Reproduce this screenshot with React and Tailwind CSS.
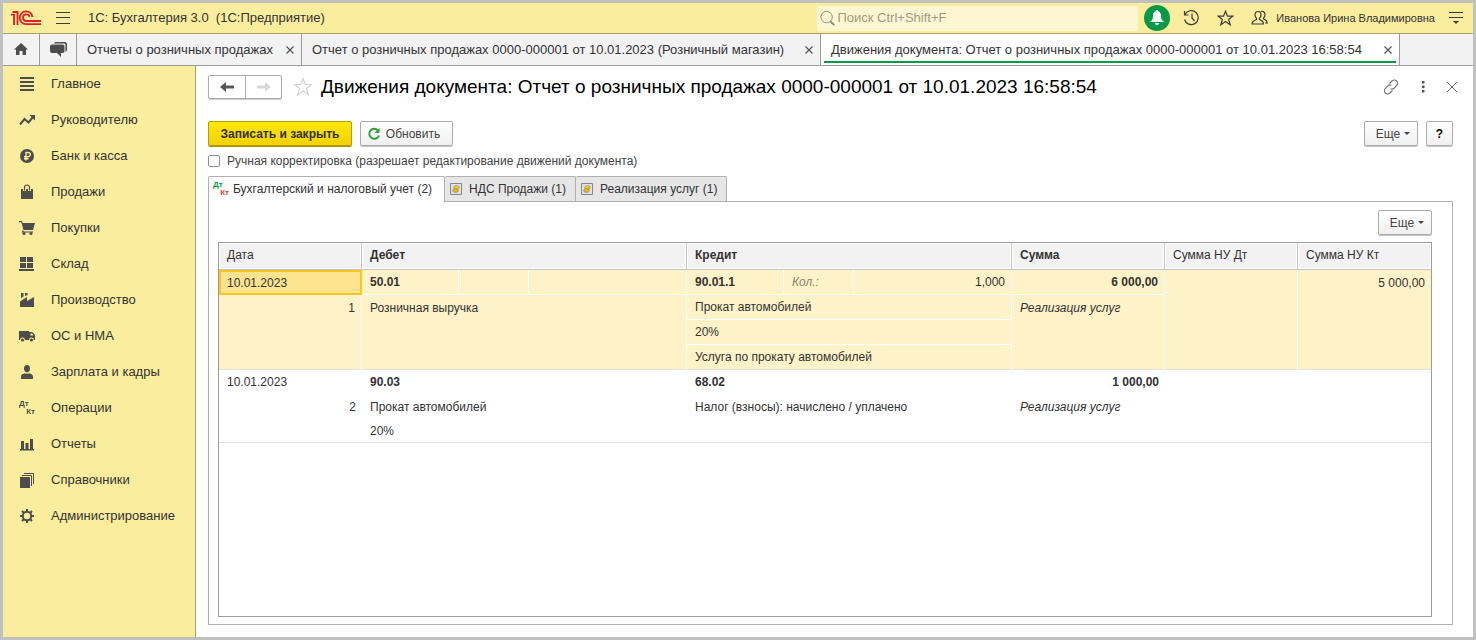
import { useState } from "react";

const font = { fontFamily: '"Liberation Sans", Arial, sans-serif' };

const menu = [
  { label: "Главное", icon: "list" },
  { label: "Руководителю", icon: "trend" },
  { label: "Банк и касса", icon: "ruble" },
  { label: "Продажи", icon: "bag" },
  { label: "Покупки", icon: "cart" },
  { label: "Склад", icon: "stock" },
  { label: "Производство", icon: "factory" },
  { label: "ОС и НМА", icon: "truck" },
  { label: "Зарплата и кадры", icon: "person" },
  { label: "Операции", icon: "dtkt" },
  { label: "Отчеты", icon: "bars" },
  { label: "Справочники", icon: "books" },
  { label: "Администрирование", icon: "gear" },
];

const windows = [
  { label: "Отчеты о розничных продажах", width: "w-[225px]" },
  { label: "Отчет о розничных продажах 0000-000001 от 10.01.2023 (Розничный магазин)", width: "w-[519px]" },
  { label: "Движения документа: Отчет о розничных продажах 0000-000001 от 10.01.2023 16:58:54", width: "w-[579px]", active: true },
];

const icons = {
  list: <path d="M1 1h14v2H1zM1 5h14v2H1zM1 9h14v2H1zM1 13h14v2H1z" />,
  trend: (
    <>
      <path d="M1 12.5 5.5 7l4 3.5L14 5" fill="none" stroke="currentColor" strokeWidth="2" />
      <path d="M10.500 3H16v5.500z" />
    </>
  ),
  ruble: (
    <>
      <circle cx="8" cy="8" r="7" />
      <path d="M7 12.500V4.500h2.200a2 2 0 0 1 0 4.200H5M5 10.700h4.500" fill="none" stroke="#fbed9e" strokeWidth="1.400" />
    </>
  ),
  bag: (
    <>
      <path d="M2 5h12v10H2z" />
      <path d="M5.500 7V3.500a2.500 2.500 0 0 1 5 0V7" fill="none" stroke="#fbed9e" strokeWidth="3" />
      <path d="M5.500 6.500V3.500a2.500 2.500 0 0 1 5 0v3" fill="none" stroke="currentColor" strokeWidth="1.200" />
    </>
  ),
  cart: (
    <>
      <path d="M0 1h3l.6 2H16l-2 7H4.500L2.300 2.300H0z" />
      <path d="M4 10.500 3.500 12H14" fill="none" stroke="currentColor" strokeWidth="1.200" />
      <circle cx="5" cy="13.500" r="1.500" />
      <circle cx="12" cy="13.500" r="1.500" />
    </>
  ),
  stock: <path d="M1 1h6v5H1zM8 1h6v5H8zM1 7h6v5H1zM8 7h6v5H8zM0 13h15v2H0z" />,
  factory: <path d="M1 15V9.500L8 5v4l7-4v10zM2 1h2.500v3.500L2 6zM6 1h2.500v2L6 4z" />,
  truck: (
    <>
      <path d="M0 3h10v9H0zM10 4h3.200L16 7v5h-6z" />
      <path d="M11.500 5.500h1.500L14.500 7.500h-3z" fill="#fbed9e" />
      <circle cx="3.500" cy="12" r="2.400" fill="#fbed9e" />
      <circle cx="12.500" cy="12" r="2.400" fill="#fbed9e" />
      <circle cx="3.500" cy="12" r="1.600" />
      <circle cx="12.500" cy="12" r="1.600" />
    </>
  ),
  person: <path d="M8 1c2 0 3 1.400 3 3.300C11 6.500 10 8.500 8 8.500S5 6.500 5 4.300C5 2.400 6 1 8 1zM2 15v-2.500C2 10.500 4 10 6 9.300c1 .7 3 .7 4 0 2 .7 4 1.200 4 3.200V15z" />,
  bars: <path d="M1 13h14v1.500H1zM2 5h3v8H2zM6.500 7h3v6h-3zM11 3h3v10h-3z" />,
  books: (
    <>
      <path d="M1 5h10v11H1z" />
      <path d="M3 3.500h9.500V14M5 1.500h9.500V12" fill="none" stroke="currentColor" />
    </>
  ),
  gear: (
    <>
      <circle cx="8" cy="8" r="4.200" fill="none" stroke="currentColor" strokeWidth="2" />
      <path
        d="M8 1v3M8 12v3M1 8h3M12 8h3M3 3l2 2M11 11l2 2M13 3l-2 2M5 11l-2 2"
        fill="none"
        stroke="currentColor"
        strokeWidth="2"
      />
    </>
  ),
};

function MenuIcon({ name }) {
  if (name === "dtkt") return <DtKt className="text-[#4d4d4d]" second="text-[#4d4d4d]" />;
  return (
    <svg width="16" height="16" viewBox="0 0 16 16" fill="currentColor" className="shrink-0 text-[#4d4d4d]">
      {icons[name]}
    </svg>
  );
}

function DtKt({ className, second }) {
  return (
    <span aria-hidden="true" className="flex w-4 shrink-0 flex-col text-left text-[8px] leading-[8px] font-bold">
      <span className={className}>Дт</span>
      <span className={`self-end ${second}`}>Кт</span>
    </span>
  );
}

function Logo() {
  return (
    <svg width="30" height="16" viewBox="0 0 30 16" fill="none" stroke="#dd1f26" strokeWidth="1.800">
      <path d="M0 4.700h3V15M1.500 2h5V15" />
      <path d="M21.500 7A6.400 6.400 0 1 0 15.500 14.200H30" />
      <path d="M18.500 6.800A3.300 3.300 0 1 0 15.500 11H30" />
    </svg>
  );
}

function RegisterIcon() {
  return (
    <svg width="12" height="12" viewBox="0 0 12 12" className="shrink-0">
      <path d="M.5.5h11v11H.5z" fill="#dfe1ea" stroke="#85858f" />
      <ellipse cx="6.500" cy="4.500" rx="2.800" ry="1.800" fill="#f0cf3c" stroke="#a8821a" strokeWidth=".7" />
      <ellipse cx="5.500" cy="7.500" rx="2.800" ry="1.900" fill="#e0b92b" stroke="#a8821a" strokeWidth=".7" />
    </svg>
  );
}

function Button({ children, className = "" }) {
  return (
    <button
      type="button"
      className={`flex h-[25px] items-center justify-center rounded-xs border border-[#ababab] bg-linear-to-b from-white to-[#f0f0f0] text-[#444] shadow-[0_1px_0_#c4c4c4] ${className}`}
    >
      {children}
    </button>
  );
}

function MoreButton() {
  return (
    <Button className="w-[54px] gap-1 pl-1">
      Еще
      <svg width="6" height="3" viewBox="0 0 6 3" fill="#444">
        <path d="M0 0h6L3 3z" />
      </svg>
    </Button>
  );
}

function Header() {
  return (
    <header className="flex h-[31px] items-center border-b border-[#a79f6c] bg-[#fbed9e] pr-[10px] pl-2">
      <Logo />
      <button type="button" aria-label="Меню" className="ml-[15px]">
        <svg width="14" height="12" viewBox="0 0 14 12" stroke="#3c3c3c">
          <path d="M0 .5h14M0 5.500h14M0 11.500h14" />
        </svg>
      </button>
      <h1 className="ml-[18px] text-[13px] whitespace-pre text-[#333]">1С: Бухгалтерия 3.0  (1С:Предприятие)</h1>
      <label className="ml-auto flex h-[25px] w-[321px] items-center rounded-xs bg-[#fdf6d3] pl-[3px]">
        <svg width="16" height="16" viewBox="0 0 16 16" fill="none" stroke="#8d8a77">
          <circle cx="7" cy="7" r="6" />
          <path d="m11 11.500 4 4" strokeWidth="2" />
        </svg>
        <input
          type="search"
          aria-label="Поиск"
          placeholder="Поиск Ctrl+Shift+F"
          className="ml-[2px] w-full bg-transparent text-[13px] outline-none placeholder:text-[#a09b80]"
        />
      </label>
      <button type="button" aria-label="Уведомления" className="ml-[6px] flex h-[26px] w-[26px] items-center justify-center rounded-full bg-[#069a48]">
        <svg width="16" height="16" viewBox="0 0 16 16" fill="#fff">
          <path d="M8 0c.8 0 1.200.5 1.200 1.200C11.500 2 12 4 12 6c0 3 .8 4 3 6H1c2.200-2 3-3 3-6 0-2 .5-4 2.800-4.800C6.800.5 7.200 0 8 0zM6 13h4c0 1.200-.8 2-2 2s-2-.8-2-2z" />
        </svg>
      </button>
      <button type="button" aria-label="История" className="ml-[13px]">
        <svg width="17" height="16" viewBox="0 0 17 16" fill="none" stroke="#3c3c3c" strokeWidth="1.200">
          <path d="M2 4.500a7 7 0 1 1-.5 5M1.500 1v4h4M9 3.500V8l2.500 3" />
        </svg>
      </button>
      <button type="button" aria-label="Избранное" className="ml-[17px]">
        <svg width="17" height="16" viewBox="0 0 17 16" fill="none" stroke="#3c3c3c" strokeWidth="1.200">
          <path d="m8.500 1.200 2 5h5.300l-4.200 3.300 1.600 5.300-4.700-3.200-4.700 3.200 1.600-5.300L1.200 6.200h5.300z" />
        </svg>
      </button>
      <button type="button" aria-label="Пользователи" className="ml-[17px]">
        <svg width="17" height="16" viewBox="0 0 17 16" fill="none" stroke="#3c3c3c" strokeWidth="1.200">
          <path d="M7 1.500c2 0 3 1.400 3 3.300 0 1.600-.6 2.800-1.500 3.500v1.200c2 .8 4 1.500 4 4.500H1c0-3 2.500-3.700 4.500-4.500V8.300C4.600 7.600 4 6.400 4 4.800 4 2.900 5 1.500 7 1.500z" />
          <path d="M10 1.500c2.500-.8 4 1 4 3 0 1.500-.5 2.600-1.400 3.400V9c1.600.6 3.600 1.500 3.600 4h-2" />
        </svg>
      </button>
      <span className="ml-2 text-[11px] text-[#333]">Иванова Ирина Владимировна</span>
      <button type="button" aria-label="Настройки" className="ml-[14px]">
        <svg width="14" height="13" viewBox="0 0 14 13" fill="#3c3c3c">
          <path d="M0 0h14v1H0zM0 5h14v1H0zM4 9h6l-3 3z" />
        </svg>
      </button>
    </header>
  );
}

function WindowTabs() {
  return (
    <nav className="flex h-8 border-b border-[#9a9a9a] bg-[#f2f2f2] text-[13px] text-[#333]">
      <button type="button" aria-label="Начальная страница" className="flex w-[37px] items-center justify-center border-r border-[#9a9a9a]">
        <svg width="14" height="13" viewBox="0 0 14 13" fill="#4d4d4d">
          <path d="M7 0 14 6.500h-2V12H8.500V8h-3v4H2V6.500H0z" />
        </svg>
      </button>
      <button type="button" aria-label="Обсуждения" className="flex w-[37px] items-center justify-center border-r border-[#9a9a9a]">
        <svg width="17" height="15" viewBox="0 0 17 15" fill="#4d4d4d">
          <path d="M5 0h10.500L17 1.500v7L15.500 10V2.500L14.500 1.500H4z" />
          <path d="M2 2.500h10.500a2 2 0 0 1 2 2V9a2 2 0 0 1-2 2H11v4l-4-4H2A2 2 0 0 1 0 9V4.500a2 2 0 0 1 2-2z" />
        </svg>
      </button>
      {windows.map(({ label, width, active }) => (
        <div
          key={label}
          className={`flex flex-col border-r border-[#9a9a9a] px-[3px] pb-[2px] ${width} ${active ? "bg-white" : ""}`}
        >
          <div
            className={`flex flex-1 items-center justify-between border-b-2 pt-1 pr-1 pl-[7px] ${active ? "border-[#069a48]" : "border-transparent"}`}
          >
            <a href="#" className="whitespace-nowrap">
              {label}
            </a>
            <button type="button" aria-label="Закрыть">
              <svg width="8" height="8" viewBox="0 0 8 8" stroke="#555" strokeWidth="1.200">
                <path d="m.5.5 7 7M7.500.5l-7 7" />
              </svg>
            </button>
          </div>
        </div>
      ))}
    </nav>
  );
}

function Sidebar() {
  return (
    <nav className="w-[193px] shrink-0 border-r border-[#a79f6c] bg-[#fbed9e]">
      {menu.map(({ label, icon }) => (
        <a key={label} href="#" className="flex h-9 items-center gap-4 pl-4 text-[13px] text-[#333]">
          <MenuIcon name={icon} />
          {label}
        </a>
      ))}
    </nav>
  );
}

function TitleBar() {
  return (
    <div className="flex h-[42px] items-center pr-4">
      <div className="flex h-6 rounded-xs border border-[#ababab] shadow-[0_1px_0_#d0d0d0]">
        <button type="button" aria-label="Назад" className="flex w-[37px] items-center justify-center border-r border-[#ababab]">
          <svg width="14" height="10" viewBox="0 0 14 10" fill="#555">
            <path d="M0 5 6 0v3.500h8v3H6V10z" />
          </svg>
        </button>
        <button type="button" disabled aria-label="Вперед" className="flex w-[35px] items-center justify-center">
          <svg width="14" height="10" viewBox="0 0 14 10" fill="#d9d9d9">
            <path d="M14 5 8 0v3.500H0v3h8V10z" />
          </svg>
        </button>
      </div>
      <button type="button" aria-label="В избранное" className="ml-[11px]">
        <svg width="20" height="20" viewBox="0 0 20 20" fill="none" stroke="#d4d4d4" strokeWidth="1.200">
          <path d="m10 1.500 2.300 6H18.500l-5 4 1.900 6.500-5.400-4-5.400 4 1.900-6.500-5-4h6.200z" />
        </svg>
      </button>
      <h2 className="ml-2 text-[19px] whitespace-nowrap text-black">
        Движения документа: Отчет о розничных продажах 0000-000001 от 10.01.2023 16:58:54
      </h2>
      <div className="ml-auto flex items-center gap-[18px]">
        <button type="button" aria-label="Ссылка">
          <svg width="16" height="16" viewBox="0 0 16 16" fill="none" stroke="#777" strokeWidth="1.200">
            <path d="M6.500 4.500 9 2a3.200 3.200 0 0 1 4.600 0 3.200 3.200 0 0 1 0 4.600L11 9.200a3.200 3.200 0 0 1-3.500.6" />
            <path d="M9.500 11.500 7 14a3.200 3.200 0 0 1-4.600 0 3.200 3.200 0 0 1 0-4.600L5 6.800a3.200 3.200 0 0 1 3.500-.6" />
          </svg>
        </button>
        <button type="button" aria-label="Еще действия" className="flex w-3 justify-center">
          <svg width="3" height="12" viewBox="0 0 3 12" fill="#555">
            <path d="M0 0h2.500v2.500H0zM0 4.500h2.500V7H0zM0 9h2.500v2.500H0z" />
          </svg>
        </button>
        <button type="button" aria-label="Закрыть">
          <svg width="10" height="10" viewBox="0 0 10 10" stroke="#666">
            <path d="m0 0 10 10M10 0 0 10" />
          </svg>
        </button>
      </div>
    </div>
  );
}

const tabs = ["НДС Продажи (1)", "Реализация услуг (1)"];

function Entries() {
  const th = "border-r border-b border-[#c6c6c6] px-2 pb-[2px] text-left text-[12px] shadow-[inset_0_0_0_1px_#fff] last:border-r-0";
  const cell = "border-r border-b border-white px-2 align-middle";
  const fill = "border-r border-b border-white border-b-[#e2e2e2] px-2";
  return (
    <table className="w-full table-fixed border-separate border-spacing-0 text-[12px] text-[#333]">
      <colgroup>
        <col className="w-[143px]" />
        <col className="w-[97px]" />
        <col className="w-[70px]" />
        <col />
        <col className="w-[97px]" />
        <col className="w-[70px]" />
        <col />
        <col className="w-[153px]" />
        <col className="w-[133px]" />
        <col className="w-[133px]" />
      </colgroup>
      <thead>
        <tr className="h-[27px] bg-[#f2f2f2]">
          <th className={`${th} font-normal`}>Дата</th>
          <th colSpan={3} className={th}>Дебет</th>
          <th colSpan={3} className={th}>Кредит</th>
          <th className={th}>Сумма</th>
          <th className={`${th} font-normal`}>Сумма НУ Дт</th>
          <th className={`${th} font-normal`}>Сумма НУ Кт</th>
        </tr>
      </thead>
      <tbody className="bg-[#fef2c8]">
        <tr className="h-[25px]">
          <td className="border-2 border-[#fcc61e] bg-[#fce48e] px-[6px]">10.01.2023</td>
          <td className={`${cell} font-bold`}>50.01</td>
          <td className={cell} />
          <td className={cell} />
          <td className={`${cell} font-bold`}>90.01.1</td>
          <td className={`${cell} text-[#8a8670] italic`}>Кол.:</td>
          <td className={`${cell} px-[6px] text-right`}>1,000</td>
          <td className={`${cell} px-[6px] text-right font-bold`}>6 000,00</td>
          <td rowSpan={4} className={fill} />
          <td className="px-[6px] text-right">5 000,00</td>
        </tr>
        <tr className="h-[25px]">
          <td rowSpan={3} className={`${fill} px-[6px] pt-1 text-right align-top`}>1</td>
          <td rowSpan={3} colSpan={3} className={`${fill} pt-1 align-top`}>Розничная выручка</td>
          <td colSpan={3} className={cell}>Прокат автомобилей</td>
          <td rowSpan={3} className={`${fill} pt-1 align-top italic`}>Реализация услуг</td>
          <td rowSpan={3} className="border-b border-[#e2e2e2]" />
        </tr>
        <tr className="h-[25px]">
          <td colSpan={3} className={cell}>20%</td>
        </tr>
        <tr className="h-[25px]">
          <td colSpan={3} className={fill}>Услуга по прокату автомобилей</td>
        </tr>
      </tbody>
      <tbody>
        <tr className="h-6">
          <td className="px-2">10.01.2023</td>
          <td colSpan={3} className="px-2 font-bold">90.03</td>
          <td colSpan={3} className="px-2 font-bold">68.02</td>
          <td className="px-[6px] text-right font-bold">1 000,00</td>
          <td />
          <td />
        </tr>
        <tr className="h-[25px]">
          <td className="px-[6px] text-right">2</td>
          <td colSpan={3} className="px-2">Прокат автомобилей</td>
          <td colSpan={3} className="px-2">Налог (взносы): начислено / уплачено</td>
          <td className="px-2 italic">Реализация услуг</td>
          <td />
          <td />
        </tr>
        <tr className="h-6">
          <td className="border-b border-[#e2e2e2]" />
          <td colSpan={3} className="border-b border-[#e2e2e2] px-2">20%</td>
          <td colSpan={6} className="border-b border-[#e2e2e2]" />
        </tr>
      </tbody>
    </table>
  );
}

export default function App() {
  const [manual, setManual] = useState(false);

  return (
    <div className="flex min-h-screen flex-col border-[3px] border-[#c0c0c0] bg-white" style={font}>
      <Header />
      <WindowTabs />
      <div className="flex flex-1">
        <Sidebar />
        <main className="flex min-w-0 flex-1 flex-col pb-3 pl-3 text-[12px]">
          <TitleBar />

          {/* Commands */}
          <div className="mt-[13px] mr-5 flex gap-2">
            <button
              type="button"
              className="h-[25px] w-36 rounded-xs border border-[#b39d00] bg-linear-to-b from-[#ffe70a] to-[#f2d200] text-[12px] font-bold text-[#333] shadow-[0_1px_0_#a89400]"
            >
              Записать и закрыть
            </button>
            <Button className="w-[93px] gap-[5px] pr-[6px]">
              <svg width="14" height="14" viewBox="0 0 14 14" fill="none" stroke="#2fa336" strokeWidth="2">
                <path d="M11 3.500A5 5 0 1 0 12 8.500" />
                <path d="M12.500 1v5h-5z" fill="#2fa336" stroke="none" />
              </svg>
              Обновить
            </Button>
            <div className="ml-auto flex gap-2">
              <MoreButton />
              <Button className="w-[27px] font-bold text-black">?</Button>
            </div>
          </div>

          <label className="mt-[7px] mr-5 flex h-4 items-center gap-[7px] text-[#444]">
            <input
              type="checkbox"
              checked={manual}
              onChange={(e) => setManual(e.target.checked)}
              className="h-3 w-3 appearance-none rounded-xs border border-[#8f8f8f] bg-white checked:bg-[#069a48]"
            />
            Ручная корректировка (разрешает редактирование движений документа)
          </label>

          {/* Registers */}
          <div role="tablist" className="mt-[7px] mr-5 flex text-[#333]">
            <button
              type="button"
              role="tab"
              aria-selected="true"
              className="z-10 -mb-px flex h-[26px] items-center gap-1 rounded-t-xs border border-b-0 border-[#b0b0b0] bg-white pr-3 pb-[2px] pl-1"
            >
              <DtKt className="text-[#069a48]" second="text-[#e0403c]" />
              Бухгалтерский и налоговый учет (2)
            </button>
            {tabs.map((label) => (
              <button
                key={label}
                type="button"
                role="tab"
                aria-selected="false"
                className="flex h-[25px] items-center gap-[7px] rounded-t-xs border border-b-0 border-l-0 border-[#b0b0b0] bg-[#e6e6e6] pr-[9px] pl-[5px]"
              >
                <RegisterIcon />
                {label}
              </button>
            ))}
          </div>
          <section className="mr-5 flex flex-1 flex-col border border-[#b0b0b0] px-[9px] pt-2 pb-[7px]">
            <div className="flex justify-end pr-[11px]">
              <MoreButton />
            </div>
            <div className="mt-[7px] mr-[11px] flex-1 border border-[#9c9c9c]">
              <Entries />
            </div>
          </section>
        </main>
      </div>
    </div>
  );
}
